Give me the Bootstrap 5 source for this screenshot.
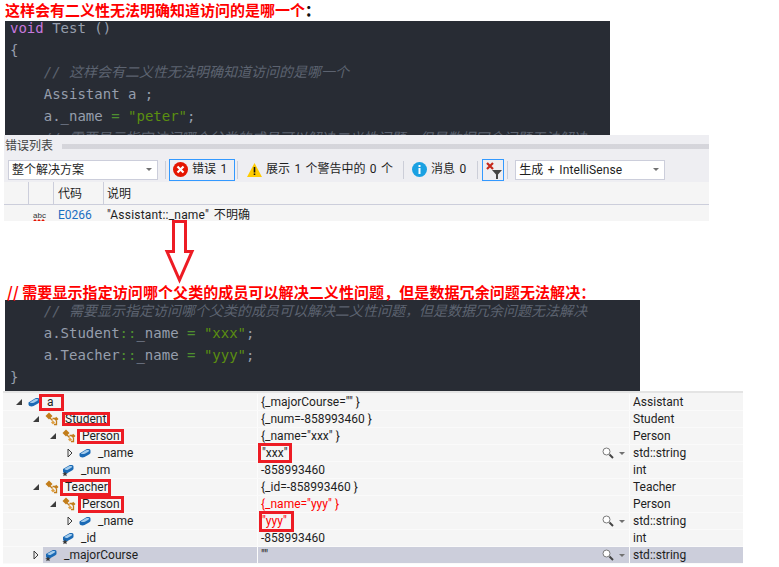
<!DOCTYPE html>
<html lang="zh">
<head>
<meta charset="utf-8">
<title>二义性</title>
<link href="https://cdn.jsdelivr.net/npm/bootstrap@5.3.0/dist/css/bootstrap.min.css" rel="stylesheet">
<style>
html,body{background:#fff;}
.page{position:relative;width:779px;height:567px;overflow:hidden;font-family:"Noto Sans CJK SC",sans-serif;}
.note{font-size:15px;font-weight:700;line-height:20px;color:#f00;white-space:nowrap;}
.note-a{height:21px;padding-left:5px;}
.note-a b{color:#111;}
.note-b{height:17px;line-height:17px;padding-left:7px;margin-top:62px;letter-spacing:.08px;}
.code{background:#282c34;margin-left:5px;overflow:hidden;font:14px/22px "DejaVu Sans Mono","Noto Sans CJK SC",monospace;color:#969eac;white-space:pre;padding-left:5px;}
.code-a{width:605px;height:114px;}
.code-a-in{margin-top:-4px;}
.code-b{width:635px;height:91px;}
.k{color:#c678dd;}.c{color:#5c6370;font-style:italic;}.s{color:#5b8f10;}.o{color:#4f8f30;}
.errs{margin-left:4px;width:705px;height:86px;background:#eeeef2;color:#1e1e1e;font:12px/17px Roboto,"Noto Sans CJK SC",sans-serif;word-spacing:1.4px;overflow:hidden;}
.errs-title{height:22px;color:#444;line-height:20px;padding-left:1px;gap:9px;}
.grip{flex:1;height:5px;background-image:radial-gradient(#b8b8c0 .6px,transparent .8px);background-size:2px 2px;}
.bar{height:25px;padding-left:4px;white-space:nowrap;}
.combo{height:20px;background:#fff;border:1px solid #cccedb;padding:0 5px 0 3px;line-height:18px;}
.combo-a{width:150px;}.combo-b{width:150px;margin-left:7px;letter-spacing:.12px;}
.caret-s{width:0;height:0;border-left:3px solid transparent;border-right:3px solid transparent;border-top:3px solid #717171;}
.sep{width:1px;height:18px;background:#ccced8;flex:none;}
.sep-a{margin-left:7px;margin-right:3px;}.sep-b{margin-left:2px;}.sep-c{margin-left:10px;}.sep-d{margin-left:11px;}.sep-e{margin-left:3px;}
.tbtn{height:22px;border:1px solid #3399ff;padding:0 0 0 3px;gap:4px;width:66px;}
.tbtn-f{width:22px;margin-left:4px;padding-left:2px;}
.titem{gap:4px;}
.ti-w{margin-left:9px;}.ti-i{margin-left:8px;}
.ehead{height:23px;background:#f5f5f5;border-bottom:1px solid #cccedb;}
.ec{height:22px;border-right:1px solid #cccedb;padding-left:3px;line-height:24px;}
.ec1{width:24px;border:0;}.ec2{width:26px;border-left:1px solid #cccedb;}.ec3{width:50px;padding-left:4px;}
.ec-pad{line-height:0;padding-top:3px;}
.erow{height:16px;background:#f5f5f5;}
.erow .ec{line-height:21px;}
.etext{letter-spacing:.2px;}
.elink{color:#1b6ec2;}
.arrow{position:absolute;left:160px;top:218px;}
.watch{margin-left:3px;width:740px;height:173px;border-top:2px solid #e4e4e4;background:#f5f5f5;padding-top:1px;font:12px/16px Roboto,"Noto Sans",sans-serif;color:#1e1e1e;}
.wrow{display:grid;grid-template-columns:254px 372px 114px;height:17px;border-bottom:1px solid #fafafa;}
.wcell{white-space:nowrap;height:16px;}
.wname{display:flex;align-items:center;}
.wval{border-left:1px solid #fcfcfc;padding-left:3px;display:flex;align-items:center;}
.wtype{border-left:1px solid #fcfcfc;padding-left:3px;}
.tall{flex:1;}
.lv0{padding-left:9px;}.lv1{padding-left:26px;}.lv2{padding-left:43px;}.lv3{padding-left:60px;}
.sel{background:#cccedb;}
.sel .wname{background:linear-gradient(90deg,#f5f5f5 40px,#cccedb 40px);}
.tw{width:16px;flex:none;display:flex;align-items:center;padding-left:3px;}
.ic{width:14px;height:14px;flex:none;margin-right:5px;}
.hl{outline:3px solid #ed1c24;display:inline-block;}
.hb8{line-height:8px;}.hb9{line-height:9px;}.hb11{line-height:11px;}.hb14{line-height:14px;}.hb15{line-height:15px;}
.b-a{padding:0 7px 0 5px;margin-left:-5px;}
.b-s{padding-right:1px;margin-left:1px;}
.b-p{padding:0 1px 0 2px;margin-left:-1px;}
.b-t{padding-left:2px;margin-left:-1px;}
.b-q{padding:0 1px;}
.b-x{padding:0 1px;}
.b-y{padding-right:4px;margin-left:1px;}
.red{color:#f00;}
.mag{display:flex;align-items:center;gap:5px;padding-right:4px;}
</style>
</head>
<body>
<svg width="0" height="0" class="position-absolute">
<defs>
<symbol id="cube" viewBox="0 0 14 14"><path d="M.5 7.500 7 3.500c1.500-.8 4.500-.5 4.500 1v2c0 1-.5 1.300-1.500 2L5.500 11c-1.500 1-5 .5-5-1.500z" fill="#1b6ab5"/><path d="M2 7.300 7 4.300c1.300-.6 3.400-.4 3.200.5-.2.800-2.900 2.400-4.300 2.900C4.500 8.200 1.600 8.300 2 7.300z" fill="#a6cdec"/></symbol>
<symbol id="cubestar" viewBox="0 0 14 14"><path d="M1 6 7 2.500c1.500-.8 4.500-.5 4.500 1v2c0 1-.5 1.300-1.500 2L5.500 10c-1.500 1-4.500.5-4.500-1.500z" fill="#1b6ab5"/><path d="M2.500 5.800 7 3.300c1.300-.6 3.400-.4 3.200.5-.2.800-2.900 2.400-4.300 2.900C4.500 7.200 2.100 6.800 2.500 5.800z" fill="#a6cdec"/><path d="M3 8.500l.8 1.700h1.900l-1.500 1.200.6 1.900L3 12.200l-1.800 1.100.6-1.900L.3 10.200h1.900z" fill="#333"/></symbol>
<symbol id="base" viewBox="0 0 14 14"><path d="M.5 4 4 .5 7.500 4 4 7.500z" fill="#c27d1a"/><path d="M9 7 11.200 4.800 13.500 7 11.200 9.300z" fill="#c27d1a"/><path d="M6 10.500 8 8.500l2 2-2 2z" fill="#e0a040"/><path d="M5 6 7.500 8.500M7.500 6.500H10M11.500 9v3.500H9" stroke="#c27d1a" stroke-width="1.300" fill="none"/></symbol>
<symbol id="open" viewBox="0 0 8 8"><path d="M7 1v6H1z" fill="#3c3c3c"/></symbol>
<symbol id="shut" viewBox="0 0 8 10"><path d="M2 1l4 4-4 4z" fill="#eee" stroke="#3c3c3c"/></symbol>
<symbol id="lens" viewBox="0 0 12 12"><circle cx="4.500" cy="4.500" r="3.500" fill="#fff" stroke="#7a7a7a"/><path d="M7.500 7.500 11 11" stroke="#444" stroke-width="2"/></symbol>
</defs>
</svg>
<div class="page">
  <div class="note note-a">这样会有二义性无法明确知道访问的是哪一个<b>：</b></div>
  <div class="code code-a"><div class="code-a-in"><span class="k">void</span> Test ()
{
    <span class="c">// 这样会有二义性无法明确知道访问的是哪一个</span>
    Assistant a ;
    a._name <span class="o">=</span> <span class="s">"peter"</span>;
    <span class="c">// 需要显示指定访问哪个父类的成员可以解决二义性问题，但是数据冗余问题无法解决</span></div></div>
  <section class="errs">
    <div class="errs-title d-flex align-items-center">错误列表<span class="grip"></span></div>
    <div class="bar d-flex align-items-center">
      <div class="combo combo-a d-flex align-items-center justify-content-between">整个解决方案<span class="caret-s"></span></div>
      <span class="sep sep-a"></span>
      <div class="tbtn titem d-flex align-items-center">
        <svg width="15" height="15" viewBox="0 0 15 15"><circle cx="7.500" cy="7.500" r="7.500" fill="#e51400"/><path d="M4.500 4.500l6 6M10.500 4.500l-6 6" stroke="#fff" stroke-width="2.200"/></svg>错误 1</div>
      <span class="sep sep-b"></span>
      <div class="titem ti-w d-flex align-items-center">
        <svg width="15" height="14" viewBox="0 0 15 14"><path d="M7.500 0 15 14H0z" fill="#fc0"/><path d="M6.700 4h1.600v5.500H6.700zM6.700 10.500h1.600V12H6.700z" fill="#111"/></svg><span>展示 1 个警告中的 0 个</span></div>
      <span class="sep sep-c"></span>
      <div class="titem ti-i d-flex align-items-center">
        <svg width="15" height="15" viewBox="0 0 15 15"><circle cx="7.500" cy="7.500" r="7.500" fill="#1ba1e2"/><path d="M6.500 3h2v2h-2zM6.500 6h2v6h-2z" fill="#fff"/></svg>消息 0</div>
      <span class="sep sep-d"></span>
      <div class="tbtn tbtn-f d-flex align-items-center">
        <svg width="18" height="18" viewBox="0 0 18 18"><path d="M2 2l6 6M8 2 2 8" stroke="#c5281c" stroke-width="2.200"/><path d="M7 9h10l-4 4.500V18h-2v-4.500z" fill="#444"/></svg></div>
      <span class="sep sep-e"></span>
      <div class="combo combo-b d-flex align-items-center justify-content-between">生成 + IntelliSense<span class="caret-s"></span></div>
    </div>
    <div class="ehead d-flex"><div class="ec ec1"></div><div class="ec ec2"></div><div class="ec ec3">代码</div><div class="ec border-0">说明</div></div>
    <div class="erow d-flex"><div class="ec ec1 border-0"></div><div class="ec ec2 ec-pad border-0">
      <svg width="16" height="16" viewBox="0 0 16 16"><text x="2" y="7" font-size="8" font-family="Liberation Sans,sans-serif" fill="#333">abc</text><path d="M2 11l2-2 2 2 2-2 2 2 2-2 2 2" stroke="#e51400" fill="none" stroke-width="1.300"/></svg></div>
      <div class="ec ec3 border-0 elink">E0266</div><div class="ec etext border-0">"Assistant::_name" 不明确</div></div>
  </section>
  <svg class="arrow" width="40" height="66" viewBox="0 0 40 66"><path d="M13.500 3.500h12v30h6.500L19.500 62 7 33.500h6.500z" fill="#fff" stroke="#ed1c24" stroke-width="3"/></svg>
  <div class="note note-b">// 需要显示指定访问哪个父类的成员可以解决二义性问题，但是数据冗余问题无法解决：</div>
  <div class="code code-b">    <span class="c">// 需要显示指定访问哪个父类的成员可以解决二义性问题，但是数据冗余问题无法解决</span>
    a.Student<span class="o">::</span>_name <span class="o">=</span> <span class="s">"xxx"</span>;
    a.Teacher<span class="o">::</span>_name <span class="o">=</span> <span class="s">"yyy"</span>;
}</div>
  <section class="watch">
    <div class="wrow"><div class="wcell wname lv0"><span class="tw"><svg width="8" height="8"><use href="#open"/></svg></span><svg class="ic"><use href="#cube"/></svg><span class="hl hb11 b-a">a</span></div><div class="wcell wval">{_majorCourse="" }</div><div class="wcell wtype">Assistant</div></div>
    <div class="wrow"><div class="wcell wname lv1"><span class="tw"><svg width="8" height="8"><use href="#open"/></svg></span><svg class="ic"><use href="#base"/></svg><span class="hl hb8 b-s">Student</span></div><div class="wcell wval">{_num=-858993460 }</div><div class="wcell wtype">Student</div></div>
    <div class="wrow"><div class="wcell wname lv2"><span class="tw"><svg width="8" height="8"><use href="#open"/></svg></span><svg class="ic"><use href="#base"/></svg><span class="hl hb9 b-p">Person</span></div><div class="wcell wval">{_name="xxx" }</div><div class="wcell wtype">Person</div></div>
    <div class="wrow"><div class="wcell wname lv3"><span class="tw"><svg width="8" height="10"><use href="#shut"/></svg></span><svg class="ic"><use href="#cube"/></svg><span>_name</span></div><div class="wcell wval"><span class="hl hb14 b-x">"xxx"</span><span class="tall"></span><span class="mag"><svg width="12" height="12"><use href="#lens"/></svg><span class="caret-s"></span></span></div><div class="wcell wtype">std::string</div></div>
    <div class="wrow"><div class="wcell wname lv2"><span class="tw"></span><svg class="ic"><use href="#cubestar"/></svg><span>_num</span></div><div class="wcell wval">-858993460</div><div class="wcell wtype">int</div></div>
    <div class="wrow"><div class="wcell wname lv1"><span class="tw"><svg width="8" height="8"><use href="#open"/></svg></span><svg class="ic"><use href="#base"/></svg><span class="hl hb11 b-t">Teacher</span></div><div class="wcell wval">{_id=-858993460 }</div><div class="wcell wtype">Teacher</div></div>
    <div class="wrow"><div class="wcell wname lv2"><span class="tw"><svg width="8" height="8"><use href="#open"/></svg></span><svg class="ic"><use href="#base"/></svg><span class="hl hb11 b-q">Person</span></div><div class="wcell wval red">{_name="yyy" }</div><div class="wcell wtype">Person</div></div>
    <div class="wrow"><div class="wcell wname lv3"><span class="tw"><svg width="8" height="10"><use href="#shut"/></svg></span><svg class="ic"><use href="#cube"/></svg><span>_name</span></div><div class="wcell wval"><span class="hl hb15 b-y red">"yyy"</span><span class="tall"></span><span class="mag"><svg width="12" height="12"><use href="#lens"/></svg><span class="caret-s"></span></span></div><div class="wcell wtype">std::string</div></div>
    <div class="wrow"><div class="wcell wname lv2"><span class="tw"></span><svg class="ic"><use href="#cubestar"/></svg><span>_id</span></div><div class="wcell wval">-858993460</div><div class="wcell wtype">int</div></div>
    <div class="wrow sel"><div class="wcell wname lv1"><span class="tw"><svg width="8" height="10"><use href="#shut"/></svg></span><svg class="ic"><use href="#cubestar"/></svg><span>_majorCourse</span></div><div class="wcell wval">""<span class="tall"></span><span class="mag"><svg width="12" height="12"><use href="#lens"/></svg><span class="caret-s"></span></span></div><div class="wcell wtype">std::string</div></div>
  </section>
</div>
<script src="https://cdn.jsdelivr.net/npm/bootstrap@5.3.0/dist/js/bootstrap.bundle.min.js"></script>
</body>
</html>
